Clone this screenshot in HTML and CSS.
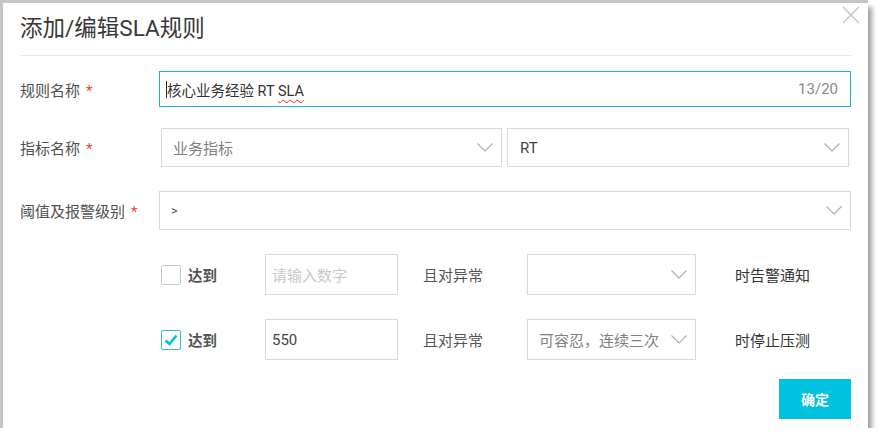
FILE: index.html
```html
<!DOCTYPE html>
<html lang="zh">
<head>
<meta charset="utf-8">
<title>SLA</title>
<link rel="stylesheet" href="styles.css">
</head>
<body>
<div class="dialog">
  <div class="header">
    <h1 class="title">添加/编辑SLA规则</h1>
    <span class="close"><svg width="18" height="18" viewBox="0 0 18 18"><path d="M1 1L17 17M17 1L1 17" stroke="#c4c4c4" stroke-width="1.4" fill="none"/></svg></span>
  </div>

  <div class="row r1">
    <div class="label w139">规则名称<span class="req">*</span></div>
    <div class="field focus">
      <span class="caret"></span><span class="val">核心业务经验 RT <span class="spell">SLA</span></span>
      <span class="count">13/20</span>
    </div>
  </div>

  <div class="row r2">
    <div class="label w141">指标名称<span class="req">*</span></div>
    <div class="select s341"><span class="muted">业务指标</span><svg class="chev" width="16" height="9" viewBox="0 0 16 9"><path d="M0.5 0.5L8 8L15.5 0.5" stroke="#aaa" stroke-width="1.1" fill="none"/></svg></div>
    <div class="select s342"><span class="dark">RT</span><svg class="chev" width="16" height="9" viewBox="0 0 16 9"><path d="M0.5 0.5L8 8L15.5 0.5" stroke="#aaa" stroke-width="1.1" fill="none"/></svg></div>
  </div>

  <div class="row r3">
    <div class="label w139">阈值及报警级别<span class="req">*</span></div>
    <div class="select grow"><span class="gt">&gt;</span><svg class="chev" width="16" height="9" viewBox="0 0 16 9"><path d="M0.5 0.5L8 8L15.5 0.5" stroke="#aaa" stroke-width="1.1" fill="none"/></svg></div>
  </div>

  <div class="row r4">
    <div class="w141"></div>
    <div class="check-group"><span class="box"></span><span class="reach">达到</span></div>
    <div class="num"><span class="ph">请输入数字</span></div>
    <div class="mid">且对异常</div>
    <div class="select s169"><span></span><svg class="chev" width="16" height="9" viewBox="0 0 16 9"><path d="M0.5 0.5L8 8L15.5 0.5" stroke="#aaa" stroke-width="1.1" fill="none"/></svg></div>
    <div class="tail">时告警通知</div>
  </div>

  <div class="row r4">
    <div class="w141"></div>
    <div class="check-group"><span class="box on"><svg width="18" height="18" viewBox="0 0 18 18"><path d="M3.5 9.5L7.5 13L14.5 4.5" stroke="#00c1de" stroke-width="2.6" fill="none"/></svg></span><span class="reach">达到</span></div>
    <div class="num"><span class="dark">550</span></div>
    <div class="mid">且对异常</div>
    <div class="select s169"><span class="muted">可容忍，连续三次</span><svg class="chev" width="16" height="9" viewBox="0 0 16 9"><path d="M0.5 0.5L8 8L15.5 0.5" stroke="#aaa" stroke-width="1.1" fill="none"/></svg></div>
    <div class="tail">时停止压测</div>
  </div>

  <div class="actions">
    <button class="ok">确定</button>
  </div>
</div>
</body>
</html>
```

FILE: styles.css
```css
html, body {
  margin: 0;
  padding: 0;
  background: #ffffff;
}
body {
  font-family: Roboto, "Noto Sans CJK SC", sans-serif;
  font-size: 15px;
  color: #555;
}
.dialog {
  position: relative;
  margin: 3px 0 0 3px;
  width: 865px;
  height: 425px;
  box-sizing: border-box;
  padding: 0 17px;
  background: #fff;
  box-shadow: -3px 0 0 #c6c6c6, 0 -3px 0 #c6c6c6, -3px -3px 0 #c6c6c6, 4px 4px 5px rgba(0,0,0,0.38);
}
.header {
  height: 52px;
  border-bottom: 1px solid #e8e8e8;
  display: flex;
  align-items: center;
}
.title {
  margin: 0;
  font-size: 22.5px;
  font-weight: normal;
  color: #373737;
  line-height: 1;
  padding-bottom: 2px;
}
.close {
  position: absolute;
  right: 8px;
  top: 3px;
  width: 18px;
  height: 18px;
}
.row {
  display: flex;
  align-items: center;
}
.r1 { margin-top: 15px; height: 36px; }
.r2 { margin-top: 21px; height: 39px; }
.r3 { margin-top: 24px; height: 39px; }
.r4 { margin-top: 24px; height: 41px; }
.label {
  color: #505050;
  font-size: 15px;
  display: flex;
  align-items: center;
  height: 100%;
}
.w139 { width: 139px; flex: none; }
.w141 { width: 141px; flex: none; }
.req {
  color: #e8472f;
  margin-left: 6px;
  font-size: 15px;
  line-height: 1;
  padding-top: 4px;
}
.field {
  flex: 1;
  height: 36px;
  box-sizing: border-box;
  border: 1px solid #ddd;
  display: flex;
  align-items: center;
  padding: 0 12px 0 6px;
  color: #333;
}
.field.focus { border-color: #1fb6cc; }
.caret {
  width: 1px;
  height: 17px;
  background: #222;
}
.val { flex: 1; font-size: 14.5px; }
.spell {
  text-decoration: underline wavy #e22;
  text-decoration-thickness: 1px;
  text-underline-offset: 3px;
}
.count { color: #888; font-size: 15px; }
.select {
  height: 100%;
  box-sizing: border-box;
  border: 1px solid #d9d9d9;
  display: flex;
  align-items: center;
  justify-content: space-between;
  padding: 0 8px 0 11px;
  flex: none;
}
.s341 { width: 341px; }
.s342 { width: 342px; margin-left: 5px; padding-left: 12px; }
.s169 { width: 169px; }
.grow { flex: 1; }
.chev { flex: none; display: block; }
.muted { color: #808080; }
.dark { color: #444; }
.gt { color: #555; font-size: 13px; }
.check-group {
  width: 104px;
  flex: none;
  display: flex;
  align-items: center;
}
.box {
  width: 20px;
  height: 20px;
  box-sizing: border-box;
  border: 1px solid #c8c8c8;
  border-radius: 2px;
  margin-right: 7px;
  display: flex;
  align-items: center;
  justify-content: center;
  background: #fff;
}
.box.on { border-color: #2cc0d8; }
.box svg { display: block; }
.reach {
  font-weight: bold;
  color: #555;
  font-size: 14.5px;
}
.num {
  width: 133px;
  height: 100%;
  flex: none;
  box-sizing: border-box;
  border: 1px solid #d9d9d9;
  display: flex;
  align-items: center;
  padding-left: 6px;
}
.ph { color: #c8c8c8; }
.mid {
  margin-left: 25px;
  width: 104px;
  flex: none;
  color: #555;
}
.tail {
  margin-left: 39px;
  color: #333;
}
.actions {
  margin-top: 19px;
  display: flex;
  justify-content: flex-end;
}
.ok {
  width: 72px;
  height: 40px;
  border: none;
  background: #00c1de;
  color: #fff;
  font-family: "Noto Sans CJK SC", sans-serif;
  font-size: 14px;
  font-weight: bold;
  padding: 0;
}
```
